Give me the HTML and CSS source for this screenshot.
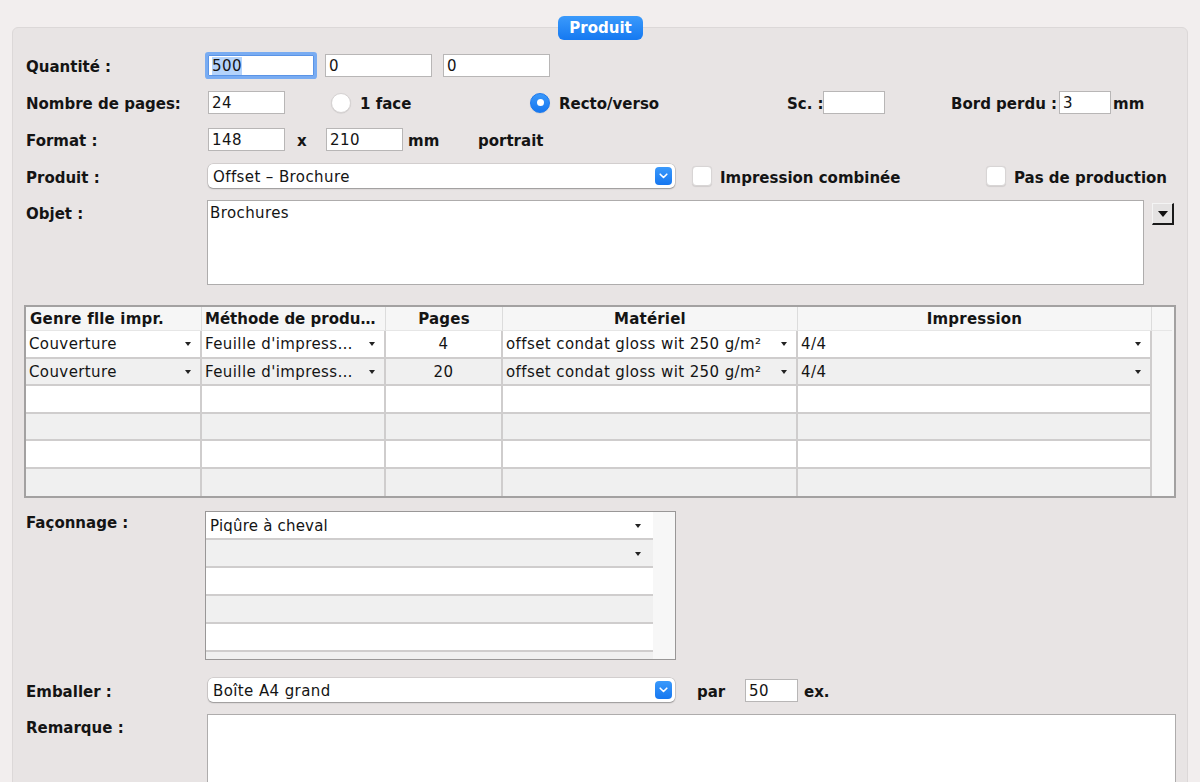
FILE: index.html
```html
<!DOCTYPE html>
<html lang="fr">
<head>
<meta charset="utf-8">
<title>Produit</title>
<link rel="stylesheet" href="styles.css">
</head>
<body>
<div class="screen">
  <div class="panel">
    <div class="badge">Produit</div>

    <div class="row r-qty">
      <div class="lbl">Quantité :</div>
      <div class="field focus w106"><span class="sel">500</span></div>
      <div class="field w107 ml11">0</div>
      <div class="field w107 ml11">0</div>
    </div>

    <div class="row r-pages">
      <div class="lbl">Nombre de pages:</div>
      <div class="field w77">24</div>
      <div class="opt g1"><span class="radio"></span><span class="bold">1 face</span></div>
      <div class="opt g2"><span class="radio on"></span><span class="bold">Recto/verso</span></div>
      <div class="bold sc">Sc. :</div>
      <div class="field w62"></div>
      <div class="bold bord">Bord perdu :</div>
      <div class="field w52">3</div>
      <div class="bold mm1">mm</div>
    </div>

    <div class="row r-format">
      <div class="lbl">Format :</div>
      <div class="field w77">148</div>
      <div class="bold times">x</div>
      <div class="field w77">210</div>
      <div class="bold mm2">mm</div>
      <div class="bold">portrait</div>
    </div>

    <div class="row r-prod">
      <div class="lbl">Produit :</div>
      <div class="select w467"><span>Offset – Brochure</span><span class="chev"><svg width="9" height="6" viewBox="0 0 9 6"><path d="M1.2 1.2 L4.5 4.5 L7.8 1.2" fill="none" stroke="#fff" stroke-width="1.6" stroke-linecap="round" stroke-linejoin="round"/></svg></span></div>
      <div class="opt c1"><span class="check"></span><span class="bold">Impression combinée</span></div>
      <div class="opt"><span class="check"></span><span class="bold">Pas de production</span></div>
    </div>

    <div class="row r-objet top">
      <div class="lbl lbl-top">Objet :</div>
      <div class="area objet">Brochures</div>
      <div class="tri-btn"><span class="tri"></span></div>
    </div>

    <div class="grid">
      <div class="gh left">Genre flle impr.</div>
      <div class="gh left">Méthode de produ…</div>
      <div class="gh">Pages</div>
      <div class="gh">Matériel</div>
      <div class="gh">Impression</div>
      <div class="gh end"></div>

      <div class="gc"><span>Couverture</span><i class="dd"></i></div>
      <div class="gc"><span>Feuille d'impress…</span><i class="dd"></i></div>
      <div class="gc center">4</div>
      <div class="gc"><span>offset condat gloss wit 250 g/m²</span><i class="dd"></i></div>
      <div class="gc"><span>4/4</span><i class="dd"></i></div>
      <div class="gutter"></div>

      <div class="gc alt"><span>Couverture</span><i class="dd"></i></div>
      <div class="gc alt"><span>Feuille d'impress…</span><i class="dd"></i></div>
      <div class="gc alt center">20</div>
      <div class="gc alt"><span>offset condat gloss wit 250 g/m²</span><i class="dd"></i></div>
      <div class="gc alt"><span>4/4</span><i class="dd"></i></div>
      <div class="gutter"></div>

      <div class="gc"></div><div class="gc"></div><div class="gc"></div><div class="gc"></div><div class="gc"></div><div class="gutter"></div>
      <div class="gc alt"></div><div class="gc alt"></div><div class="gc alt"></div><div class="gc alt"></div><div class="gc alt"></div><div class="gutter"></div>
      <div class="gc"></div><div class="gc"></div><div class="gc"></div><div class="gc"></div><div class="gc"></div><div class="gutter"></div>
      <div class="gc alt last"></div><div class="gc alt last"></div><div class="gc alt last"></div><div class="gc alt last"></div><div class="gc alt last"></div><div class="gutter"></div>
    </div>

    <div class="row r-faco top">
      <div class="lbl lbl-faco">Façonnage :</div>
      <div class="listbox">
        <div class="lrows">
          <div class="lr"><span>Piqûre à cheval</span><i class="dd"></i></div>
          <div class="lr alt"><span></span><i class="dd"></i></div>
          <div class="lr"></div>
          <div class="lr alt"></div>
          <div class="lr"></div>
          <div class="lr alt"></div>
        </div>
        <div class="lgutter"></div>
      </div>
    </div>

    <div class="row r-emb">
      <div class="lbl">Emballer :</div>
      <div class="select w467"><span>Boîte A4 grand</span><span class="chev"><svg width="9" height="6" viewBox="0 0 9 6"><path d="M1.2 1.2 L4.5 4.5 L7.8 1.2" fill="none" stroke="#fff" stroke-width="1.6" stroke-linecap="round" stroke-linejoin="round"/></svg></span></div>
      <div class="bold par">par</div>
      <div class="field w53">50</div>
      <div class="bold ex">ex.</div>
    </div>

    <div class="row r-rem top">
      <div class="lbl lbl-top">Remarque :</div>
      <div class="area remarque"></div>
    </div>
  </div>
</div>
</body>
</html>
```

FILE: styles.css
```css
* { box-sizing: border-box; }

html, body {
  margin: 0;
  width: 1200px;
  height: 782px;
  overflow: hidden;
}

body {
  background: #f2eeee;
  font-family: "DejaVu Sans", "Liberation Sans", sans-serif;
  font-size: 15px;
  letter-spacing: 0.4px;
  color: #141414;
}

.screen {
  padding-top: 27px;
}

.panel {
  position: relative;
  margin: 0 12px;
  height: 800px;
  background: #e8e4e4;
  border: 1px solid #dcd8d8;
  border-radius: 6px;
  padding: 24px 0 0 13px;
}

.badge {
  position: absolute;
  top: -12px;
  left: 545px;
  width: 85px;
  height: 24px;
  border-radius: 6px;
  background: linear-gradient(#3b9afb, #1579f1);
  color: #fff;
  font-weight: bold;
  font-size: 15px;
  letter-spacing: 0;
  line-height: 24px;
  text-align: center;
}

.row {
  display: flex;
  align-items: center;
}

.row.top { align-items: flex-start; }

.lbl {
  width: 182px;
  flex: none;
  font-weight: bold;
  letter-spacing: 0;
  white-space: nowrap;
  padding-top: 3px;
}

.bold { font-weight: bold; letter-spacing: 0; white-space: nowrap; padding-top: 3px; }

/* row spacing */
.r-qty { height: 26px; }
.r-pages { height: 23px; margin-top: 13px; }
.r-format { height: 23px; margin-top: 14px; }
.r-prod { height: 24px; margin-top: 13px; }
.r-objet { margin-top: 12px; }
.grid { margin-top: 20px; }
.r-faco { margin-top: 13px; }
.r-emb { height: 24px; margin-top: 18px; }
.r-rem { margin-top: 12px; }

/* text fields */
.field {
  flex: none;
  height: 23px;
  background: #fff;
  border: 1px solid #b8b6b6;
  padding: 1px 3px 0;
  line-height: 21px;
  white-space: nowrap;
}

.field.focus {
  height: 21px;
  line-height: 19px;
  border-color: #5b94e6;
  border-radius: 1px;
  box-shadow: 0 0 0 3px #79acf2;
}

.sel { background: #b4d3fb; }

.w106 { width: 106px; }
.w107 { width: 107px; }
.w77 { width: 77px; }
.w62 { width: 62px; }
.w52 { width: 52px; }
.w53 { width: 53px; }
.ml11 { margin-left: 11px; }

/* radios & checkboxes */
.opt {
  display: flex;
  align-items: center;
  flex: none;
}

.g1 { margin-left: 46px; width: 199px; }
.g2 { width: 257px; }

.radio {
  width: 20px;
  height: 20px;
  border-radius: 50%;
  background: #fff;
  border: 1px solid #d6d3d3;
  box-shadow: 0 0.5px 1px rgba(0,0,0,0.12);
  margin-right: 9px;
  flex: none;
  display: flex;
  align-items: center;
  justify-content: center;
}

.radio.on {
  background: linear-gradient(#3a98fa, #1677f0);
  border-color: #1a78ee;
}

.radio.on::after {
  content: "";
  width: 7px;
  height: 7px;
  border-radius: 50%;
  background: #fff;
}

.sc { width: 36px; }
.bord { margin-left: 66px; width: 108px; }
.mm1 { margin-left: 2px; }

.times { margin-left: 12px; width: 29px; }
.mm2 { margin-left: 5px; width: 70px; }

.select {
  flex: none;
  height: 24px;
  background: #fff;
  border-radius: 5px;
  box-shadow: 0 0 0 0.5px rgba(0,0,0,0.18), 0 1px 1.5px rgba(0,0,0,0.28);
  display: flex;
  align-items: center;
  justify-content: space-between;
  padding: 1px 3px 0 5px;
  white-space: nowrap;
}

.w467 { width: 467px; }

.chev {
  width: 17px;
  height: 18px;
  margin-top: -1px;
  border-radius: 4px;
  background: linear-gradient(#3a99fb, #1677f0);
  display: flex;
  align-items: center;
  justify-content: center;
}

.check {
  width: 20px;
  height: 20px;
  border-radius: 4px;
  background: #fff;
  border: 1px solid #d8d5d5;
  box-shadow: 0 0.5px 1px rgba(0,0,0,0.1);
  margin-right: 8px;
  flex: none;
}

.c1 { margin-left: 17px; width: 294px; }

/* objet */
.lbl-top { padding-top: 5px; }

.area {
  flex: none;
  background: #fff;
  border: 1px solid #aeacac;
  padding: 3px 2px;
}

.objet {
  width: 937px;
  height: 85px;
  margin-left: -1px;
}

.tri-btn {
  margin: 3px 0 0 8px;
  width: 22px;
  height: 22px;
  background: #e4e2e2;
  border-top: 1px solid #f4f4f4;
  border-left: 1px solid #f4f4f4;
  border-right: 2px solid #1a1a1a;
  border-bottom: 2px solid #1a1a1a;
  display: flex;
  align-items: center;
  justify-content: center;
}

.tri {
  width: 0;
  height: 0;
  border-left: 5px solid transparent;
  border-right: 5px solid transparent;
  border-top: 6px solid #111;
  margin-top: 1px;
}

/* table */
.grid {
  margin-left: -2px;
  width: 1152px;
  border: 2px solid #a3a1a1;
  background: #f6f6f6;
  display: grid;
  grid-template-columns: 176px 184px 117px 295px 354px 20px;
  grid-template-rows: 24px repeat(6, 27.5px);
}

.gh {
  background: #f6f6f6;
  font-weight: bold;
  letter-spacing: 0.2px;
  text-align: center;
  line-height: 24px;
  border-right: 1px solid #dcdcdc;
  border-bottom: 1px solid #e6e6e6;
  white-space: nowrap;
  overflow: hidden;
}

.gh.left { text-align: left; padding-left: 4px; }
.gh.left + .gh.left { padding-left: 3px; letter-spacing: 0; }
.gh.end { border-right: none; }

.gc {
  background: #fff;
  border-right: 2px solid #cfcdcd;
  border-bottom: 2px solid #cfcdcd;
  display: flex;
  align-items: center;
  justify-content: space-between;
  padding: 1px 9px 0 3px;
  white-space: nowrap;
  overflow: hidden;
}

.gc.alt { background: #f0f0f0; }
.gc.last { border-bottom: none; }
.gc.center { justify-content: center; padding: 1px 0 0; }

.gutter { background: #f6f6f6; }

.dd {
  width: 0;
  height: 0;
  border-left: 3.5px solid transparent;
  border-right: 3.5px solid transparent;
  border-top: 4px solid #222;
  flex: none;
}

/* façonnage */
.lbl-faco { padding-top: 3px; }

.listbox {
  margin-left: -3px;
  width: 471px;
  height: 149px;
  border: 1px solid #999797;
  background: #f7f7f7;
  display: flex;
  overflow: hidden;
  flex: none;
}

.lrows {
  width: 447px;
  flex: none;
}

.lgutter { flex: 1; background: #f7f7f7; }

.lr {
  height: 28px;
  background: #fff;
  border-bottom: 2px solid #cfcdcd;
  display: flex;
  align-items: center;
  justify-content: space-between;
  padding: 1px 12px 0 4px;
  white-space: nowrap;
  letter-spacing: 0.2px;
}

.lr.alt { background: #f0f0f0; }

/* emballer */
.par { margin-left: 22px; width: 48px; }
.ex { margin-left: 6px; }

.remarque {
  width: 969px;
  height: 120px;
  margin-left: -1px;
}
```
